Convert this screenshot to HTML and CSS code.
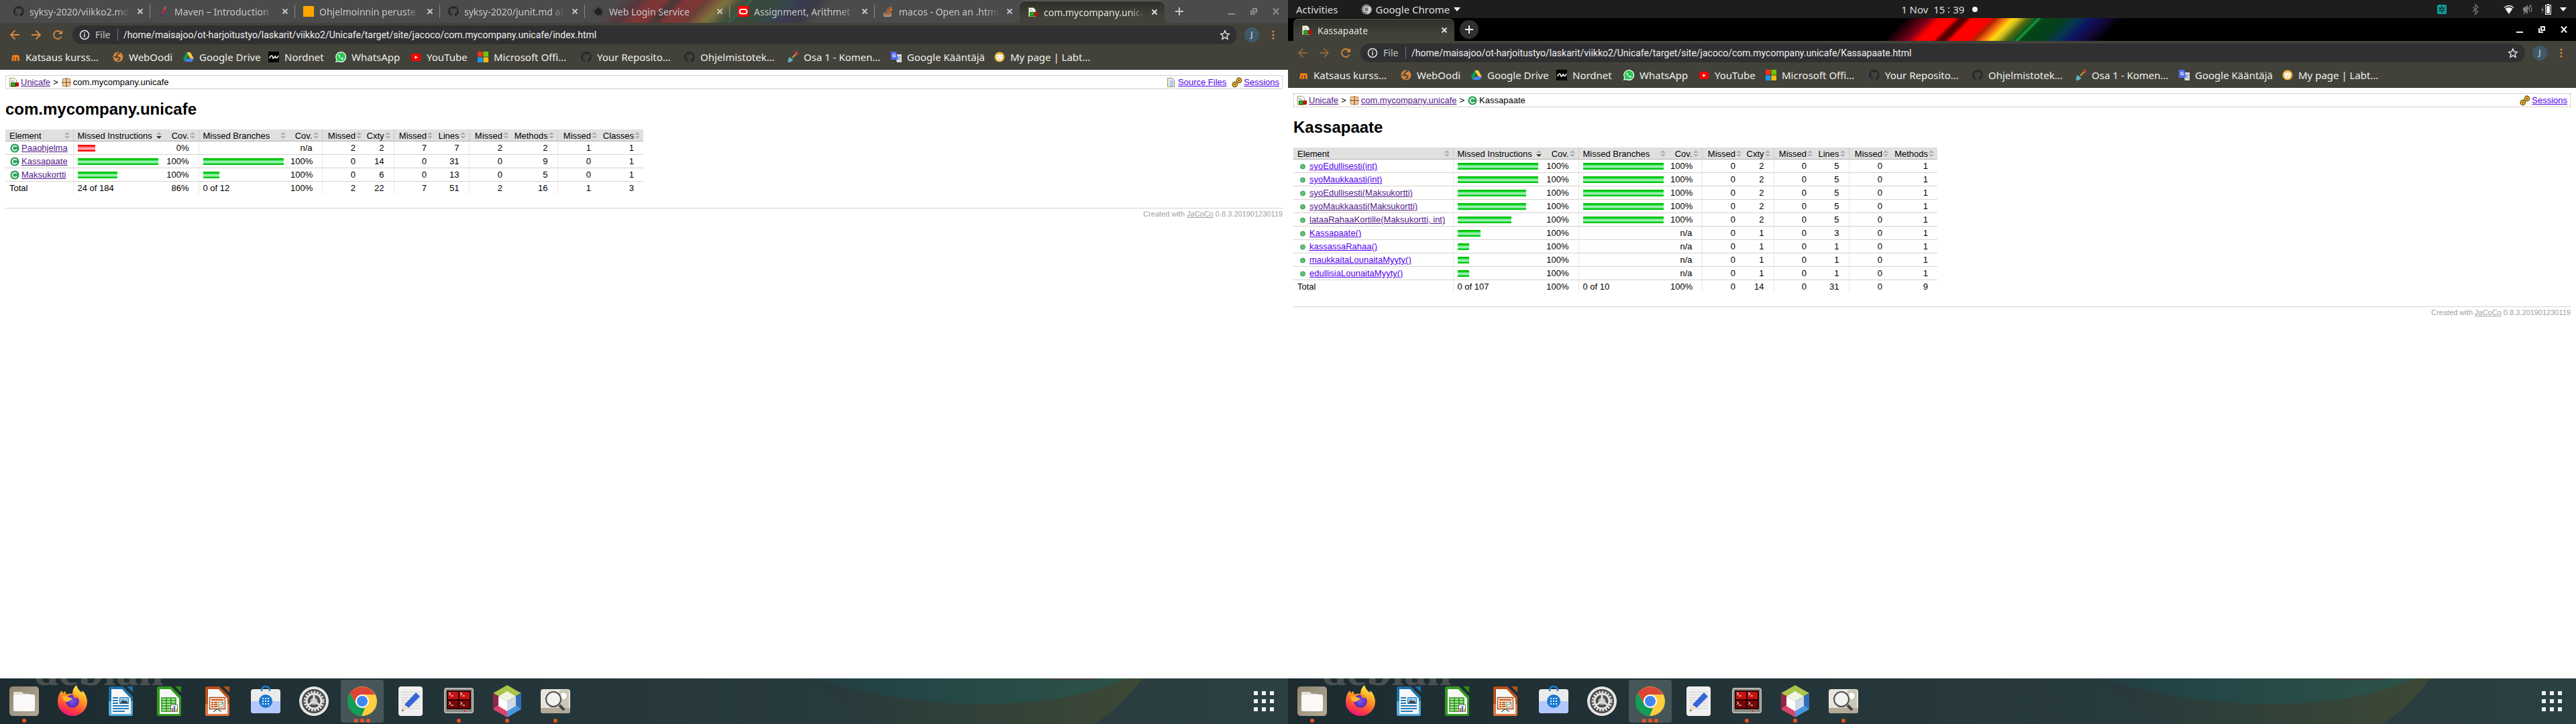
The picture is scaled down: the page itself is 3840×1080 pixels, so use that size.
FILE: index.html
```html
<!DOCTYPE html>
<html lang="en">
<head>
<meta charset="utf-8">
<title>com.mycompany.unicafe</title>
<link rel="stylesheet" href="styles.css">
</head>
<body>
<svg class="sprite" aria-hidden="true">
  <linearGradient id="g-fx" x1="0.7" y1="0" x2="0.3" y2="1"><stop offset="0" stop-color="#fff24a"/><stop offset=".4" stop-color="#ff9a1f"/><stop offset=".75" stop-color="#ff4040"/><stop offset="1" stop-color="#e3107f"/></linearGradient>
  <radialGradient id="g-fxc"><stop offset="0" stop-color="#7a52f0"/><stop offset="1" stop-color="#5b2bb0"/></radialGradient>
  <linearGradient id="g-tile" x1="0" y1="0" x2="1" y2="1"><stop offset="0" stop-color="#8f8672"/><stop offset="1" stop-color="#b3aa96"/></linearGradient>
  <linearGradient id="g-olive"><stop offset="0" stop-color="#26383c"/><stop offset=".35" stop-color="#2d3f3a"/><stop offset="1" stop-color="#3d4835"/></linearGradient>
  <linearGradient id="g-teal"><stop offset="0" stop-color="#223e42"/><stop offset=".3" stop-color="#234647"/><stop offset="1" stop-color="#2d5348"/></linearGradient>

  <symbol id="i-github" viewBox="0 0 16 16"><path fill="#24292e" d="M8 0a8 8 0 0 0-2.500 15.600c.4.100.500-.200.500-.400v-1.500c-2.200.500-2.700-1-2.700-1-.4-.9-.9-1.200-.9-1.200-.7-.5.1-.5.1-.5.8.1 1.200.8 1.200.8.7 1.300 1.900.9 2.300.7.1-.5.3-.9.5-1.100-1.800-.2-3.600-.9-3.600-4 0-.9.3-1.600.8-2.100 0-.2-.4-1 .1-2.100 0 0 .7-.2 2.200.8a7.600 7.600 0 0 1 4 0c1.500-1 2.200-.8 2.200-.8.4 1.100.2 1.900.1 2.100.5.6.8 1.300.8 2.100 0 3.100-1.900 3.700-3.700 3.900.3.300.6.800.6 1.500v2.200c0 .200.100.500.600.400A8 8 0 0 0 8 0z"/></symbol>
  <symbol id="i-feather" viewBox="0 0 16 16"><path fill="#c0245a" d="M4 15 6 8 8 4l3-3-1 6-3 5z"/><path fill="#f0762b" d="m8.500 4 2-4 .8 1-.8 4z"/><path stroke="#4b1f66" d="m3.500 16 2-5"/></symbol>
  <symbol id="i-square" viewBox="0 0 16 16"><path fill="#ffa500" d="M0 0h16v16H0z"/></symbol>
  <symbol id="i-login" viewBox="0 0 16 16"><path fill="#202124" d="m7 1 2 3 2-2v3l4-1-3 3 4 1-3 1 2 4-4-2 1 5-3-3-3 2V12l-4 1 2-3-4-1 3-1-3-4 4 2z"/></symbol>
  <symbol id="i-oracle" viewBox="0 0 16 16"><path fill="#f00" d="M0 0h16v16H0z"/><rect x="2.500" y="5" width="11" height="6.500" rx="3.200" fill="none" stroke="#fff" stroke-width="2"/></symbol>
  <symbol id="i-stack" viewBox="0 0 16 16"><path fill="none" stroke="#bcbbbb" stroke-width="1.300" d="M2 10v5h10v-5"/><path stroke="#e2762b" stroke-width="1.300" d="M3.500 13h7M3.700 10.500l6.900.9M4.500 7.500l6.500 2.300M6.300 4.500l5.500 4M9 2l4 5.500M12 .5l1.500 6"/></symbol>
  <symbol id="i-report" viewBox="0 0 16 16"><path fill="#fff" stroke="#a59a55" d="M1.500 1.500h7l3 3v10h-10z"/><path stroke="#9aa7c7" d="M3 4.500h4M3 6.500h6"/><path fill="#1cb81c" stroke="#1a5c1a" d="M3.500 8.500h6v5h-6z"/><path fill="#c00f0f" d="M10 8h5v6h-5z"/></symbol>
  <symbol id="i-package" viewBox="0 0 16 16"><path fill="#f0d3a8" stroke="#b57a45" d="M2.500 2.500h11v11h-11z"/><path fill="none" stroke="#a5673a" stroke-width="1.500" d="M8 1v14M1 8h14"/></symbol>
  <symbol id="i-class" viewBox="0 0 16 16"><circle cx="8" cy="8" r="6.600" fill="#2ba05f"/><path fill="none" stroke="#e6f6e6" stroke-width="1.800" d="M11 6.300a3.500 3.500 0 1 0 0 3.500"/></symbol>
  <symbol id="i-method" viewBox="0 0 16 16"><circle cx="8" cy="8.500" r="3.500" fill="#62c077" stroke="#2f9a58"/></symbol>
  <symbol id="i-source" viewBox="0 0 16 16"><path fill="#dfe6f5" stroke="#a59a55" d="M2.500 1.500h7l3 3v10h-10z"/><path fill="#b9c7e2" d="M6 5h5v9H6z"/></symbol>
  <symbol id="i-session" viewBox="0 0 16 16"><g fill="#e8b830" stroke="#7a5517" stroke-width="1.400"><circle cx="11" cy="5" r="3.700"/><circle cx="4.800" cy="11" r="3.700"/></g><g fill="#7a5517"><circle cx="11" cy="5" r="1.200"/><circle cx="4.800" cy="11" r="1.200"/></g></symbol>
  <symbol id="i-moodle" viewBox="0 0 16 16"><path fill="none" stroke="#f98012" stroke-width="2.800" d="M5 14V8.500q0-2 2-2t2 2V14m0-5.500q0-2 2.200-2t2.300 2V14"/><path fill="#4b4038" d="m0 5 5-3 3 2-4 2v3H1z"/></symbol>
  <symbol id="i-oodi" viewBox="0 0 16 16"><circle cx="8" cy="8" r="7.500" fill="#d9863b"/><path fill="none" stroke="#42423b" stroke-width="1.800" d="M11 2Q6 3 6 5.500T9.500 9 7 14M2 8q3-1 4 2"/></symbol>
  <symbol id="i-drive" viewBox="0 0 16 16"><path fill="#0f9d58" d="M5.300 1 0 10.500 2.700 15 8 5.600z"/><path fill="#ffcd40" d="M5.300 1h5.400L16 10.500h-5.300z"/><path fill="#4285f4" d="M5.300 10.500H16L13.300 15H2.700z"/></symbol>
  <symbol id="i-nordnet" viewBox="0 0 16 16"><path fill="#000" d="M0 0h16v16H0z"/><path fill="none" stroke="#fff" stroke-width="1.500" d="M1.500 10q2-4 3.500-4t2 4q2 0 3.500-4 .5 4 2 3.500T15 6"/></symbol>
  <symbol id="i-whatsapp" viewBox="0 0 16 16"><path fill="#fff" d="m0 16 1.200-4A8 8 0 1 1 4 14.900z"/><path fill="#25c850" d="m1.500 14.500.9-3A6.700 6.700 0 1 1 4.600 13.700z"/><path fill="#fff" d="M5.500 4q-2 1.500 0 4t4.500 3.700q1.800 0 2-1.900l-2-1-1 1.200Q7 9 6.300 7.300L7 6.300z"/></symbol>
  <symbol id="i-youtube" viewBox="0 0 16 16"><rect x="1" y="3" width="14" height="11" rx="2.500" fill="#f00"/><path fill="#fff" d="m6.500 6 4 2.500-4 2.500z"/></symbol>
  <symbol id="i-ms" viewBox="0 0 16 16"><path fill="#f22f1d" d="M0 0h7.500v7.500H0z"/><path fill="#6fc400" d="M8.500 0H16v7.500H8.500z"/><path fill="#129bf0" d="M0 8.500h7.500V16H0z"/><path fill="#fdbb10" d="M8.500 8.500H16V16H8.500z"/></symbol>
  <symbol id="i-shovel" viewBox="0 0 16 16"><path stroke="#d99a3b" stroke-width="1.800" d="m7 9 6-6"/><path fill="none" stroke="#c0392b" stroke-width="1.800" d="m12 1 3 3V1z"/><path fill="#5fb3bd" d="m3 8 5 4q-1 4-7 4-1-5 2-8z"/></symbol>
  <symbol id="i-translate" viewBox="0 0 16 16"><path fill="#dcdcdc" d="M6 4h10v12H9z"/><path fill="#4f6df5" d="M0 0h8l3 12H1q-1 0-1-1z"/><path fill="none" stroke="#fff" stroke-width="1.100" d="M6.500 4.500a2 2 0 1 0 0 2.500V6H5"/><path fill="none" stroke="#78909c" d="M10 8h5m-2.500-1v1q-.5 3-2 4m1-2 3 3"/></symbol>
  <symbol id="i-lab" viewBox="0 0 16 16"><circle cx="8" cy="8" r="7.500" fill="#efb43a"/><path fill="#fff" d="M3.500 4q2 1 4.500 0 2.500 1 4.500 0v4q0 5-4.500 5T3.500 8z"/><path stroke="#8a6a50" d="M6 7v1m4-1v1m-3 2.500h2"/></symbol>

  <symbol id="i-back" viewBox="0 0 16 16"><path fill="none" stroke="currentColor" stroke-width="1.800" d="M15 8H2m6.500-6.500L2 8l6.500 6.500"/></symbol>
  <symbol id="i-fwd" viewBox="0 0 16 16"><path fill="none" stroke="currentColor" stroke-width="1.800" d="M1 8h13M7.500 1.500 14 8l-6.500 6.500"/></symbol>
  <symbol id="i-reload" viewBox="0 0 16 16"><path fill="none" stroke="currentColor" stroke-width="1.800" d="M13.500 10.500A6 6 0 1 1 12.500 4"/><path fill="currentColor" d="M15 1v6H9z"/></symbol>
  <symbol id="i-info" viewBox="0 0 16 16"><circle cx="8" cy="8" r="6.500" fill="none" stroke="currentColor" stroke-width="1.500"/><path stroke="currentColor" stroke-width="1.600" d="M8 7v4.500M8 4.300v1.600"/></symbol>
  <symbol id="i-star" viewBox="0 0 16 16"><path fill="none" stroke="currentColor" stroke-width="1.400" d="m8 1.800 1.800 4.300 4.700.4-3.500 3.100 1 4.600L8 11.800l-4 2.400 1-4.600L1.500 6.500l4.700-.4z"/></symbol>
  <symbol id="i-dots" viewBox="0 0 16 16"><g fill="currentColor"><circle cx="8" cy="3" r="1.600"/><circle cx="8" cy="8" r="1.600"/><circle cx="8" cy="13" r="1.600"/></g></symbol>
  <symbol id="i-x" viewBox="0 0 16 16"><path stroke="currentColor" stroke-width="1.800" d="m4.500 4.500 7 7m0-7-7 7"/></symbol>
  <symbol id="i-plus" viewBox="0 0 16 16"><path stroke="currentColor" stroke-width="2" d="M8 2v12M2 8h12"/></symbol>
  <symbol id="i-min" viewBox="0 0 16 16"><path fill="currentColor" d="M3 11h10v2H3z"/></symbol>
  <symbol id="i-restore" viewBox="0 0 16 16"><path fill="none" stroke="currentColor" stroke-width="2" d="M7 4h5v5H7zM4 6v6h6"/></symbol>
  <symbol id="i-close" viewBox="0 0 16 16"><path stroke="currentColor" stroke-width="2" d="m4 3.500 8 9m0-9-8 9"/></symbol>

  <symbol id="d-files" viewBox="0 0 44 44"><rect width="44" height="44" rx="5" fill="url(#g-tile)"/><path fill="#e3dfd6" d="M6 10q0-2 2-2h10q2 0 3 3h10v6H6z"/><rect x="6" y="12" width="32" height="25" rx="2.500" fill="#faf9f7"/></symbol>
  <symbol id="d-firefox" viewBox="0 0 44 44"><path fill="url(#g-fx)" d="M0 23Q0 13 6 6l2 4 3-3 2 5q5-2 9-1Q22 3 28-2q2 7 8 11l1-3q7 8 7 17a22 21 0 0 1-44 0z"/><circle cx="22" cy="22" r="10" fill="url(#g-fxc)"/><path fill="#ffb52e" d="M7 15q6-1 12 2l3 1q-2 3-6 4-4 3-8-3z"/><path fill="#ff8d1f" d="M22 12q8 0 10 7-4-3-7-2z"/></symbol>
  <symbol id="d-writer" viewBox="0 0 44 44"><path fill="#1b6fa8" d="M4 3q0-3 3-3h18l15 15v26q0 3-3 3H7q-3 0-3-3z"/><path fill="#52aadc" d="M4 22h36v19q0 3-3 3H7q-3 0-3-3z"/><path fill="#f7f7f7" d="M8 4h16l13 14v22q0 1-1 1H8z"/><path fill="#1b6fa8" d="M31 0h9v9z"/><path stroke="#1f7bb8" stroke-width="2" d="M10 17h8m-8 4h8m-8 4h8m-8 4h24m-24 4h24m-24 4h18"/><path fill="#8fc6ea" stroke="#1f7bb8" d="M20.500 16.500h13v9h-13z"/><path fill="#444" d="m21 25 4-5 3 2 2-1 3 4z"/></symbol>
  <symbol id="d-calc" viewBox="0 0 44 44"><path fill="#329a1e" d="M4 3q0-3 3-3h18l15 15v26q0 3-3 3H7q-3 0-3-3z"/><path fill="#f7f7f7" d="M8 4h16l13 14v22q0 1-1 1H8z"/><path fill="#2f8a18" d="M31 0h9v9z"/><path fill="#a8ee9d" stroke="#2a8a1a" stroke-width="1.400" d="M11 17h21v20H11zm0 4h21m-21 4h21m-21 4h21m-21 4h21M18 17v20m7-20v20"/><path fill="#fff" stroke="#777" d="M24.500 27.500h10v10h-10z"/><path stroke="#e2632b" stroke-width="2.500" d="M27 37v-5"/><path stroke="#2f83d6" stroke-width="2.500" d="M30 37v-8"/><path stroke="#f0b030" stroke-width="2" d="M33 37v-4"/></symbol>
  <symbol id="d-impress" viewBox="0 0 44 44"><path fill="#b84e16" d="M4 3q0-3 3-3h18l15 15v26q0 3-3 3H7q-3 0-3-3z"/><path fill="#e07440" d="M4 26h36v15q0 3-3 3H7q-3 0-3-3z"/><path fill="#f7f7f7" d="M8 4h16l13 14v22q0 1-1 1H8z"/><path fill="#b84e16" d="M31 0h9v9z"/><path fill="#fbe0cf" stroke="#a84c18" stroke-width="1.300" d="M10.500 16.500h23v17h-23z"/><path stroke="#c8611f" stroke-width="2" d="M13 20h18M13 24h3m1 0h5m-9 3h3m1 0h5m-9 3h3m1 0h5"/><path fill="#fff" stroke="#888" d="M23.500 23.500h7v7h-7z"/><path fill="none" stroke="#2f9a3a" d="m24 29 3-3 1 1 2-3"/><path fill="none" stroke="#666" stroke-width="1.500" d="m16 38 5-4h2l5 4"/></symbol>
  <symbol id="d-software" viewBox="0 0 44 44"><rect y="4" width="44" height="36" rx="4" fill="#ebebeb"/><path fill="#b4c9fb" d="M0 22h44v14q0 4-4 4H4q-4 0-4-4z"/><path fill="none" stroke="#2080d0" stroke-width="2.500" d="M16 7q0-7 6-7t6 7"/><circle cx="22" cy="22" r="10" fill="#1878d2"/><path stroke="#fff" stroke-width="2" stroke-dasharray="2 2" d="M17 18h11m-11 4h11m-11 4h11"/></symbol>
  <symbol id="d-settings" viewBox="0 0 44 44"><circle cx="22" cy="22" r="22" fill="#e6e6e4"/><circle cx="22" cy="22" r="18" fill="#4a4a4a"/><circle cx="22" cy="22" r="13.500" fill="none" stroke="#dedede" stroke-width="4" stroke-dasharray="2.500 2"/><circle cx="22" cy="22" r="11" fill="none" stroke="#dedede" stroke-width="3"/><circle cx="22" cy="22" r="5.500" fill="#bbb"/><path stroke="#dedede" stroke-width="3" d="M22 22V11m0 11-9 6m9-6 9 6"/></symbol>
  <symbol id="d-chrome" viewBox="0 0 44 44"><circle cx="22" cy="22" r="22" fill="#ffcd40"/><path fill="#db4437" d="M3.500 10A22 22 0 0 1 41 12H22a10 10 0 0 0-9 15z"/><path fill="#0f9d58" d="M3.500 10 13 27q4 6 13 5l-5 12A22 22 0 0 1 3.500 10z"/><circle cx="22" cy="22" r="10" fill="#fff"/><circle cx="22" cy="22" r="8" fill="#4285f4"/></symbol>
  <symbol id="d-editor" viewBox="0 0 44 44"><rect x="4" width="36" height="44" rx="4" fill="#efefef"/><path stroke="#d0d0d0" d="M8 8.500h28M8 12.500h28M8 16.500h28M8 20.500h28M8 24.500h28M8 28.500h28M8 32.500h28"/><path fill="#3465d8" d="m30 9 6 6-17 17-6-5z"/><path fill="#f3dcc0" d="m13 27 6 5-9 5z"/><path fill="#333" d="m10 34 2 2-3 1z"/></symbol>
  <symbol id="d-term" viewBox="0 0 44 44"><rect y="2" width="44" height="38" rx="4" fill="#c6c6bf"/><rect x="1.500" y="3.500" width="41" height="35" rx="3" fill="#8a8a84"/><path fill="#2a0000" d="M4 6h36v28H4z"/><path fill="#c41212" d="M6 8h15v11H6zM23 8h15v11H23z"/><path fill="#770606" d="M6 21h15v11H6zM23 21h15v11H23z"/><path fill="none" stroke="#fff" d="m7 9 3 2-3 2m3 1h4m10-5 3 2-3 2m3 1h4"/><path fill="none" stroke="#fff" d="m7 23 3 2-3 2m3 1h4m10-5 3 2-3 2m3 1h4"/><circle cx="31" cy="37" r="1.200" fill="#f22"/></symbol>
  <symbol id="d-netbeans" viewBox="0 0 44 48"><path fill="#aac54b" d="M22 0 43 12 22 23 1 12z"/><path fill="#8f2746" d="M1 12 22 23 9 30 1 36z"/><path fill="#d9456a" d="m1 36 10-8 11 8v12z"/><path fill="#2f6cb8" d="M43 12v24l-9-8V17z"/><path fill="#4a94e0" d="M22 48V36l12-8 9 8z"/><path fill="#f1f5e0" d="m22 9 13 8-13 7-13-7z"/><path fill="#fff" d="m9 17 13 7v15L9 31z"/><path fill="#cfdae6" d="m35 17-13 7v15l13-8z"/></symbol>
  <symbol id="d-viewer" viewBox="0 0 44 44"><rect y="4" width="44" height="36" rx="4" fill="#e6e5da"/><path fill="#c9c8b8" d="M14 32 30 5h12v27z"/><path fill="#b3aa97" d="M0 32h44v4q0 4-4 4H4q-4 0-4-4z"/><circle cx="34" cy="14" r="4.500" fill="#fff"/><circle cx="19" cy="19" r="11" fill="#f2f2ef" stroke="#4d4d4d" stroke-width="2"/><path stroke="#444" stroke-width="4" d="m28 28 7 7"/></symbol>
  <symbol id="d-grid" viewBox="0 0 32 44"><path fill="#f0f0ee" d="M1 7h6v6H1zM13 7h6v6h-6zM25 7h6v6h-6zM1 19h6v6H1zM13 19h6v6h-6zM25 19h6v6h-6zM1 31h6v6H1zM13 31h6v6h-6zM25 31h6v6h-6z"/></symbol>
  <symbol id="d-waves" viewBox="0 0 500 68"><path fill="url(#g-olive)" d="M0 0h493q-30 40-71 68H80Z"/><path fill="url(#g-teal)" d="M4 0q127 38 254 38T470 0z"/><path fill="#453f3d" d="M347 0q44 6 88 0z"/></symbol>
</svg>

<section class="monitor">
  <div class="strip strip-dim">
    <div class="tab"><svg class="ico"><use href="#i-github"/></svg><span class="tab-title">syksy-2020/viikko2.md</span><button class="tab-x" aria-label="Close tab"><svg class="ico"><use href="#i-x"/></svg></button></div>
    <div class="tab"><svg class="ico"><use href="#i-feather"/></svg><span class="tab-title">Maven – Introduction</span><button class="tab-x" aria-label="Close tab"><svg class="ico"><use href="#i-x"/></svg></button></div>
    <div class="tab"><svg class="ico"><use href="#i-square"/></svg><span class="tab-title">Ohjelmoinnin peruste</span><button class="tab-x" aria-label="Close tab"><svg class="ico"><use href="#i-x"/></svg></button></div>
    <div class="tab"><svg class="ico"><use href="#i-github"/></svg><span class="tab-title">syksy-2020/junit.md at</span><button class="tab-x" aria-label="Close tab"><svg class="ico"><use href="#i-x"/></svg></button></div>
    <div class="tab"><svg class="ico"><use href="#i-login"/></svg><span class="tab-title">Web Login Service</span><button class="tab-x" aria-label="Close tab"><svg class="ico"><use href="#i-x"/></svg></button></div>
    <div class="tab"><svg class="ico"><use href="#i-oracle"/></svg><span class="tab-title">Assignment, Arithmet</span><button class="tab-x" aria-label="Close tab"><svg class="ico"><use href="#i-x"/></svg></button></div>
    <div class="tab tab-last"><svg class="ico"><use href="#i-stack"/></svg><span class="tab-title">macos - Open an .html</span><button class="tab-x" aria-label="Close tab"><svg class="ico"><use href="#i-x"/></svg></button></div>
    <div class="tab tab-active"><svg class="ico"><use href="#i-report"/></svg><span class="tab-title">com.mycompany.unica</span><button class="tab-x" aria-label="Close tab"><svg class="ico"><use href="#i-x"/></svg></button></div>
    <button class="new-tab" aria-label="New tab"><svg class="ico"><use href="#i-plus"/></svg></button>
    <div class="win-buttons"><button aria-label="Minimize"><svg class="ico"><use href="#i-min"/></svg></button><button aria-label="Restore"><svg class="ico"><use href="#i-restore"/></svg></button><button aria-label="Close"><svg class="ico"><use href="#i-close"/></svg></button></div>
  </div>
  <div class="toolbar">
    <button class="nav" aria-label="Back"><svg class="ico"><use href="#i-back"/></svg></button>
    <button class="nav" aria-label="Forward"><svg class="ico"><use href="#i-fwd"/></svg></button>
    <button class="nav" aria-label="Reload"><svg class="ico"><use href="#i-reload"/></svg></button>
    <div class="omnibox"><svg class="ico"><use href="#i-info"/></svg><label class="scheme" for="url-a">File</label><input id="url-a" class="url" value="/home/maisajoo/ot-harjoitustyo/laskarit/viikko2/Unicafe/target/site/jacoco/com.mycompany.unicafe/index.html"><button class="star" aria-label="Bookmark"><svg class="ico"><use href="#i-star"/></svg></button></div>
    <button class="avatar">J</button>
    <button class="nav" aria-label="Menu"><svg class="ico"><use href="#i-dots"/></svg></button>
  </div>
  <nav class="bookmarks">
    <a class="bm wide" href="#"><svg class="ico"><use href="#i-moodle"/></svg>Katsaus kurss…</a>
    <a class="bm short" href="#"><svg class="ico"><use href="#i-oodi"/></svg>WebOodi</a>
    <a class="bm mid" href="#"><svg class="ico"><use href="#i-drive"/></svg>Google Drive</a>
    <a class="bm" href="#"><svg class="ico"><use href="#i-nordnet"/></svg>Nordnet</a>
    <a class="bm medium" href="#"><svg class="ico"><use href="#i-whatsapp"/></svg>WhatsApp</a>
    <a class="bm" href="#"><svg class="ico"><use href="#i-youtube"/></svg>YouTube</a>
    <a class="bm wide" href="#"><svg class="ico"><use href="#i-ms"/></svg>Microsoft Offi…</a>
    <a class="bm wide" href="#"><svg class="ico"><use href="#i-github"/></svg>Your Reposito…</a>
    <a class="bm wide" href="#"><svg class="ico"><use href="#i-github"/></svg>Ohjelmistotek…</a>
    <a class="bm wide" href="#"><svg class="ico"><use href="#i-shovel"/></svg>Osa 1 - Komen…</a>
    <a class="bm wide" href="#"><svg class="ico"><use href="#i-translate"/></svg>Google Kääntäjä</a>
    <a class="bm wide" href="#"><svg class="ico"><use href="#i-lab"/></svg>My page | Labt…</a>
  </nav>
  <main class="page">
    <div class="breadcrumb">
      <a class="el" href="#"><svg class="ico"><use href="#i-report"/></svg><span>Unicafe</span></a><span>&gt;</span><span class="el"><svg class="ico"><use href="#i-package"/></svg><span>com.mycompany.unicafe</span></span>
      <span class="info"><a class="el fresh" href="#"><svg class="ico"><use href="#i-source"/></svg><span>Source Files</span></a><a class="el fresh" href="#"><svg class="ico"><use href="#i-session"/></svg><span>Sessions</span></a></span>
    </div>
    <h1>com.mycompany.unicafe</h1>
    <table class="coverage">
      <colgroup><col class="c-package"><col class="c-instr"><col class="c-cov"><col class="c-branch"><col class="c-cov2"><col class="c-missed"><col class="c-cxty"><col class="c-missed2"><col class="c-lines"><col class="c-missed"><col class="c-methods"><col class="c-missed"><col class="c-missed"></colgroup>
      <thead><tr><th>Element</th><th class="bar down">Missed Instructions</th><th class="n">Cov.</th><th class="bar">Missed Branches</th><th class="n">Cov.</th><th class="n sep">Missed</th><th class="n">Cxty</th><th class="n sep">Missed</th><th class="n">Lines</th><th class="n sep">Missed</th><th class="n">Methods</th><th class="n sep">Missed</th><th class="n">Classes</th></tr></thead>
      <tbody>
        <tr><td><a class="el" href="#"><svg class="ico"><use href="#i-class"/></svg><span>Paaohjelma</span></a></td><td class="bar"><i class="meter red" style="width:26px"></i></td><td class="n">0%</td><td class="bar"></td><td class="n">n/a</td><td class="n sep">2</td><td class="n">2</td><td class="n sep">7</td><td class="n">7</td><td class="n sep">2</td><td class="n">2</td><td class="n sep">1</td><td class="n">1</td></tr>
        <tr><td><a class="el" href="#"><svg class="ico"><use href="#i-class"/></svg><span>Kassapaate</span></a></td><td class="bar"><i class="meter" style="width:120px"></i></td><td class="n">100%</td><td class="bar"><i class="meter" style="width:120px"></i></td><td class="n">100%</td><td class="n sep">0</td><td class="n">14</td><td class="n sep">0</td><td class="n">31</td><td class="n sep">0</td><td class="n">9</td><td class="n sep">0</td><td class="n">1</td></tr>
        <tr><td><a class="el" href="#"><svg class="ico"><use href="#i-class"/></svg><span>Maksukortti</span></a></td><td class="bar"><i class="meter" style="width:59px"></i></td><td class="n">100%</td><td class="bar"><i class="meter" style="width:24px"></i></td><td class="n">100%</td><td class="n sep">0</td><td class="n">6</td><td class="n sep">0</td><td class="n">13</td><td class="n sep">0</td><td class="n">5</td><td class="n sep">0</td><td class="n">1</td></tr>
      </tbody>
      <tfoot><tr><td>Total</td><td class="bar">24 of 184</td><td class="n">86%</td><td class="bar">0 of 12</td><td class="n">100%</td><td class="n sep">2</td><td class="n">22</td><td class="n sep">7</td><td class="n">51</td><td class="n sep">2</td><td class="n">16</td><td class="n sep">1</td><td class="n">3</td></tr></tfoot>
    </table>
    <footer class="footer">Created with <a href="#">JaCoCo</a> 0.8.3.201901230119</footer>
  </main>
  <div class="dock">
    <svg class="waves" aria-hidden="true"><use href="#d-waves"/></svg>
    <span class="watermark" aria-hidden="true">debian</span>
    <button class="app" aria-label="Files"><svg><use href="#d-files"/></svg><i class="run"></i></button>
    <button class="app" aria-label="Firefox"><svg><use href="#d-firefox"/></svg></button>
    <button class="app" aria-label="Writer"><svg><use href="#d-writer"/></svg></button>
    <button class="app" aria-label="Calc"><svg><use href="#d-calc"/></svg></button>
    <button class="app" aria-label="Impress"><svg><use href="#d-impress"/></svg></button>
    <button class="app" aria-label="Software"><svg><use href="#d-software"/></svg></button>
    <button class="app" aria-label="Settings"><svg><use href="#d-settings"/></svg></button>
    <button class="app current" aria-label="Chrome"><svg><use href="#d-chrome"/></svg><i class="run three"></i></button>
    <button class="app" aria-label="Text Editor"><svg><use href="#d-editor"/></svg></button>
    <button class="app" aria-label="Terminal"><svg><use href="#d-term"/></svg><i class="run"></i></button>
    <button class="app" aria-label="NetBeans"><svg><use href="#d-netbeans"/></svg><i class="run"></i></button>
    <button class="app" aria-label="Image Viewer"><svg><use href="#d-viewer"/></svg><i class="run"></i></button>
    <button class="app last" aria-label="Show Applications"><svg><use href="#d-grid"/></svg></button>
  </div>
</section>

<section class="monitor">
  <header class="topbar">
    <button>Activities</button>
    <button class="app-menu"><svg class="ico" viewBox="0 0 16 16"><circle cx="8" cy="8" r="7.500" fill="#8a8a8a"/><path fill="#c9c9c9" d="M8 4.500h6.700A7.500 7.500 0 0 1 8 15.500l3-6z"/><circle cx="8" cy="8" r="3.500" fill="#777" stroke="#e6e6e6" stroke-width="1.200"/></svg>Google Chrome<svg class="caret" viewBox="0 0 10 6"><path fill="#fff" d="M0 0h10L5 6z"/></svg></button>
    <button class="clock">1 Nov&nbsp; 15 ∶ 39<i class="dot"></i></button>
    <div class="tray">
      <svg class="ico" viewBox="0 0 16 16"><rect x="1" y="1" width="14" height="14" rx="2.500" fill="#0f9d9a"/><path stroke="#0c2f33" stroke-width="2" d="M8 3v10M3.700 5.500l8.600 5m0-5-8.600 5"/><circle cx="8" cy="8" r="1.500" fill="#0f9d9a"/></svg>
      <svg class="ico gap-l" viewBox="0 0 16 16"><path fill="none" stroke="#6a6a6a" stroke-width="1.500" d="m4 4.500 8 7L8 15V1l4 3.500-8 7"/></svg>
      <svg class="ico gap-l" viewBox="0 0 16 16"><path fill="#f2f2f2" d="M2.500 7Q8 3 13.500 7L8 15z"/><path fill="none" stroke="#f2f2f2" stroke-width="1.400" d="M1 5.500q7-6 14 0"/></svg>
      <svg class="ico" viewBox="0 0 16 16"><path fill="#7d7d7d" d="M1 5h3l4-4v14l-4-4H1z"/><path fill="none" stroke="#7d7d7d" stroke-width="1.300" d="M2 15 13 1m-3 5q1.500 3 0 5m2.500-8q3 5 0 9"/></svg>
      <svg class="ico" viewBox="0 0 16 16"><path fill="#8a8a8a" d="M3 3 0 9h2l-1 5 3-6H2z"/><path fill="#f2f2f2" d="M9 0h3v1h3v15H6V1h3z"/><path fill="none" stroke="#1d1d1d" d="M7.500 2.500h6v12h-6z"/></svg>
      <svg class="caret" viewBox="0 0 10 6"><path fill="#fff" d="M0 0h10L5 6z"/></svg>
    </div>
  </header>
  <div class="strip strip-dark">
    <div class="tab tab-active tab-wide"><svg class="ico"><use href="#i-report"/></svg><span class="tab-title">Kassapaate</span><button class="tab-x" aria-label="Close tab"><svg class="ico"><use href="#i-x"/></svg></button></div>
    <button class="new-tab" aria-label="New tab"><svg class="ico"><use href="#i-plus"/></svg></button>
    <div class="win-buttons"><button aria-label="Minimize"><svg class="ico"><use href="#i-min"/></svg></button><button aria-label="Restore"><svg class="ico"><use href="#i-restore"/></svg></button><button aria-label="Close"><svg class="ico"><use href="#i-close"/></svg></button></div>
  </div>
  <div class="toolbar">
    <button class="nav off" aria-label="Back"><svg class="ico"><use href="#i-back"/></svg></button>
    <button class="nav off" aria-label="Forward"><svg class="ico"><use href="#i-fwd"/></svg></button>
    <button class="nav" aria-label="Reload"><svg class="ico"><use href="#i-reload"/></svg></button>
    <div class="omnibox"><svg class="ico"><use href="#i-info"/></svg><label class="scheme" for="url-b">File</label><input id="url-b" class="url" value="/home/maisajoo/ot-harjoitustyo/laskarit/viikko2/Unicafe/target/site/jacoco/com.mycompany.unicafe/Kassapaate.html"><button class="star" aria-label="Bookmark"><svg class="ico"><use href="#i-star"/></svg></button></div>
    <button class="avatar">J</button>
    <button class="nav" aria-label="Menu"><svg class="ico"><use href="#i-dots"/></svg></button>
  </div>
  <nav class="bookmarks">
    <a class="bm wide" href="#"><svg class="ico"><use href="#i-moodle"/></svg>Katsaus kurss…</a>
    <a class="bm short" href="#"><svg class="ico"><use href="#i-oodi"/></svg>WebOodi</a>
    <a class="bm mid" href="#"><svg class="ico"><use href="#i-drive"/></svg>Google Drive</a>
    <a class="bm" href="#"><svg class="ico"><use href="#i-nordnet"/></svg>Nordnet</a>
    <a class="bm medium" href="#"><svg class="ico"><use href="#i-whatsapp"/></svg>WhatsApp</a>
    <a class="bm" href="#"><svg class="ico"><use href="#i-youtube"/></svg>YouTube</a>
    <a class="bm wide" href="#"><svg class="ico"><use href="#i-ms"/></svg>Microsoft Offi…</a>
    <a class="bm wide" href="#"><svg class="ico"><use href="#i-github"/></svg>Your Reposito…</a>
    <a class="bm wide" href="#"><svg class="ico"><use href="#i-github"/></svg>Ohjelmistotek…</a>
    <a class="bm wide" href="#"><svg class="ico"><use href="#i-shovel"/></svg>Osa 1 - Komen…</a>
    <a class="bm wide" href="#"><svg class="ico"><use href="#i-translate"/></svg>Google Kääntäjä</a>
    <a class="bm wide" href="#"><svg class="ico"><use href="#i-lab"/></svg>My page | Labt…</a>
  </nav>
  <main class="page">
    <div class="breadcrumb">
      <a class="el" href="#"><svg class="ico"><use href="#i-report"/></svg><span>Unicafe</span></a><span>&gt;</span><a class="el" href="#"><svg class="ico"><use href="#i-package"/></svg><span>com.mycompany.unicafe</span></a><span>&gt;</span><span class="el"><svg class="ico"><use href="#i-class"/></svg><span>Kassapaate</span></span>
      <span class="info"><a class="el fresh" href="#"><svg class="ico"><use href="#i-session"/></svg><span>Sessions</span></a></span>
    </div>
    <h1>Kassapaate</h1>
    <table class="coverage">
      <colgroup><col class="c-class"><col class="c-instr"><col class="c-cov"><col class="c-branch"><col class="c-cov2"><col class="c-missed"><col class="c-cxty"><col class="c-missed2"><col class="c-lines"><col class="c-missed"><col class="c-methods"></colgroup>
      <thead><tr><th>Element</th><th class="bar down">Missed Instructions</th><th class="n">Cov.</th><th class="bar">Missed Branches</th><th class="n">Cov.</th><th class="n sep">Missed</th><th class="n">Cxty</th><th class="n sep">Missed</th><th class="n">Lines</th><th class="n sep">Missed</th><th class="n">Methods</th></tr></thead>
      <tbody>
        <tr><td><a class="el fresh" href="#"><svg class="ico"><use href="#i-method"/></svg><span>syoEdullisesti(int)</span></a></td><td class="bar"><i class="meter" style="width:120px"></i></td><td class="n">100%</td><td class="bar"><i class="meter" style="width:120px"></i></td><td class="n">100%</td><td class="n sep">0</td><td class="n">2</td><td class="n sep">0</td><td class="n">5</td><td class="n sep">0</td><td class="n">1</td></tr>
        <tr><td><a class="el fresh" href="#"><svg class="ico"><use href="#i-method"/></svg><span>syoMaukkaasti(int)</span></a></td><td class="bar"><i class="meter" style="width:120px"></i></td><td class="n">100%</td><td class="bar"><i class="meter" style="width:120px"></i></td><td class="n">100%</td><td class="n sep">0</td><td class="n">2</td><td class="n sep">0</td><td class="n">5</td><td class="n sep">0</td><td class="n">1</td></tr>
        <tr><td><a class="el" href="#"><svg class="ico"><use href="#i-method"/></svg><span>syoEdullisesti(Maksukortti)</span></a></td><td class="bar"><i class="meter" style="width:102px"></i></td><td class="n">100%</td><td class="bar"><i class="meter" style="width:120px"></i></td><td class="n">100%</td><td class="n sep">0</td><td class="n">2</td><td class="n sep">0</td><td class="n">5</td><td class="n sep">0</td><td class="n">1</td></tr>
        <tr><td><a class="el" href="#"><svg class="ico"><use href="#i-method"/></svg><span>syoMaukkaasti(Maksukortti)</span></a></td><td class="bar"><i class="meter" style="width:102px"></i></td><td class="n">100%</td><td class="bar"><i class="meter" style="width:120px"></i></td><td class="n">100%</td><td class="n sep">0</td><td class="n">2</td><td class="n sep">0</td><td class="n">5</td><td class="n sep">0</td><td class="n">1</td></tr>
        <tr><td><a class="el" href="#"><svg class="ico"><use href="#i-method"/></svg><span>lataaRahaaKortille(Maksukortti, int)</span></a></td><td class="bar"><i class="meter" style="width:80px"></i></td><td class="n">100%</td><td class="bar"><i class="meter" style="width:120px"></i></td><td class="n">100%</td><td class="n sep">0</td><td class="n">2</td><td class="n sep">0</td><td class="n">5</td><td class="n sep">0</td><td class="n">1</td></tr>
        <tr><td><a class="el fresh" href="#"><svg class="ico"><use href="#i-method"/></svg><span>Kassapaate()</span></a></td><td class="bar"><i class="meter" style="width:34px"></i></td><td class="n">100%</td><td class="bar"></td><td class="n">n/a</td><td class="n sep">0</td><td class="n">1</td><td class="n sep">0</td><td class="n">3</td><td class="n sep">0</td><td class="n">1</td></tr>
        <tr><td><a class="el fresh" href="#"><svg class="ico"><use href="#i-method"/></svg><span>kassassaRahaa()</span></a></td><td class="bar"><i class="meter" style="width:17px"></i></td><td class="n">100%</td><td class="bar"></td><td class="n">n/a</td><td class="n sep">0</td><td class="n">1</td><td class="n sep">0</td><td class="n">1</td><td class="n sep">0</td><td class="n">1</td></tr>
        <tr><td><a class="el fresh" href="#"><svg class="ico"><use href="#i-method"/></svg><span>maukkaitaLounaitaMyyty()</span></a></td><td class="bar"><i class="meter" style="width:17px"></i></td><td class="n">100%</td><td class="bar"></td><td class="n">n/a</td><td class="n sep">0</td><td class="n">1</td><td class="n sep">0</td><td class="n">1</td><td class="n sep">0</td><td class="n">1</td></tr>
        <tr><td><a class="el fresh" href="#"><svg class="ico"><use href="#i-method"/></svg><span>edullisiaLounaitaMyyty()</span></a></td><td class="bar"><i class="meter" style="width:17px"></i></td><td class="n">100%</td><td class="bar"></td><td class="n">n/a</td><td class="n sep">0</td><td class="n">1</td><td class="n sep">0</td><td class="n">1</td><td class="n sep">0</td><td class="n">1</td></tr>
      </tbody>
      <tfoot><tr><td>Total</td><td class="bar">0 of 107</td><td class="n">100%</td><td class="bar">0 of 10</td><td class="n">100%</td><td class="n sep">0</td><td class="n">14</td><td class="n sep">0</td><td class="n">31</td><td class="n sep">0</td><td class="n">9</td></tr></tfoot>
    </table>
    <footer class="footer">Created with <a href="#">JaCoCo</a> 0.8.3.201901230119</footer>
  </main>
  <div class="dock">
    <svg class="waves" aria-hidden="true"><use href="#d-waves"/></svg>
    <span class="watermark" aria-hidden="true">debian</span>
    <button class="app" aria-label="Files"><svg><use href="#d-files"/></svg><i class="run"></i></button>
    <button class="app" aria-label="Firefox"><svg><use href="#d-firefox"/></svg></button>
    <button class="app" aria-label="Writer"><svg><use href="#d-writer"/></svg></button>
    <button class="app" aria-label="Calc"><svg><use href="#d-calc"/></svg></button>
    <button class="app" aria-label="Impress"><svg><use href="#d-impress"/></svg></button>
    <button class="app" aria-label="Software"><svg><use href="#d-software"/></svg></button>
    <button class="app" aria-label="Settings"><svg><use href="#d-settings"/></svg></button>
    <button class="app current" aria-label="Chrome"><svg><use href="#d-chrome"/></svg><i class="run three"></i></button>
    <button class="app" aria-label="Text Editor"><svg><use href="#d-editor"/></svg></button>
    <button class="app" aria-label="Terminal"><svg><use href="#d-term"/></svg><i class="run"></i></button>
    <button class="app" aria-label="NetBeans"><svg><use href="#d-netbeans"/></svg><i class="run"></i></button>
    <button class="app" aria-label="Image Viewer"><svg><use href="#d-viewer"/></svg><i class="run"></i></button>
    <button class="app last" aria-label="Show Applications"><svg><use href="#d-grid"/></svg></button>
  </div>
</section>
</body>
</html>
```
FILE: styles.css
```css
* { box-sizing: border-box; }

body {
  margin: 0;
  min-height: 100vh;
  display: grid;
  grid-template-columns: 1fr 1fr;
  background: #fff;
  font-family: "Noto Sans", "Open Sans", sans-serif;
  font-size: 14px;
}

button {
  border: 0;
  padding: 0;
  background: none;
  color: inherit;
  font: inherit;
}

.sprite { position: absolute; width: 0; height: 0; }
.ico { width: 16px; height: 16px; flex: none; display: block; overflow: visible; }
.caret { width: 10px; height: 6px; }

.monitor { display: flex; flex-direction: column; min-width: 0; }

/* Desktop top bar */
.topbar {
  height: 27px;
  display: grid;
  grid-template-columns: auto 1fr auto 1fr;
  align-items: center;
  padding: 0 14px 0 12px;
  background: #1d1d1d;
  color: #dedede;
  font-size: 15px;
}
.app-menu { display: flex; align-items: center; gap: 6px; margin-left: 34px; }
.clock { display: flex; align-items: center; gap: 12px; margin-right: 38px; }
.dot { width: 8px; height: 8px; border-radius: 50%; background: #f2f2f2; }
.tray { display: flex; align-items: center; justify-content: flex-end; gap: 12px; }
.gap-l { margin-left: 22px; }

/* Tab strip */
.strip {
  --rainbow: linear-gradient(135deg, transparent 14%, #7a0018 22%, #f00 26%, #f00 31%, #500 33%, #500 35%, #f00 37%, #f00 43%, #b02000 45%, #f07010 48%, #ffd80c 51%, #d0c020 53%, #5a6a10 56%, #0c5a20 59%, #18a040 60%, #06461a 61%, #033f18 68%, #063a50 73%, #0c1464 78%, #14083c 83%, transparent 89%);
  height: 34px;
  display: flex;
  align-items: stretch;
  padding: 0 10px 0 8px;
}
.strip-dim {
  background: linear-gradient(#4b4b4bb8, #4b4b4bb8), var(--rainbow) 860px 0 / 400px 34px no-repeat, #4b4b4b;
  color: #c9c9c9;
}
.strip-dark {
  background: var(--rainbow) 860px 0 / 400px 34px no-repeat, #000;
  color: #f0f0f0;
}
.tab {
  width: 216px;
  display: flex;
  align-items: center;
  gap: 8px;
  padding: 0 7px 0 12px;
  background: linear-gradient(#8a8a8a, #8a8a8a) right center / 1px 20px no-repeat;
}
.tab-last { background: none; }
.tab-title {
  flex: 1;
  overflow: hidden;
  white-space: nowrap;
  -webkit-mask-image: linear-gradient(90deg, #000 calc(100% - 20px), transparent);
  mask-image: linear-gradient(90deg, #000 calc(100% - 20px), transparent);
}
.tab-active {
  margin-top: 1px;
  border-radius: 8px 8px 0 0;
  background: linear-gradient(#2f2f2a, #42423b 70%);
  border-top: 1px solid #66665c;
  color: #e6e6e0;
}
.tab-wide { width: 240px; }
.new-tab {
  width: 28px;
  height: 28px;
  margin: 3px 0 0 8px;
  border-radius: 50%;
  display: grid;
  place-items: center;
}
.strip-dark .new-tab { background: #303032; }
.win-buttons { margin-left: auto; display: flex; align-items: center; gap: 17px; }
.strip-dim .win-buttons { color: #8f8f8f; }

/* Toolbar */
.toolbar {
  height: 36px;
  display: flex;
  align-items: center;
  gap: 16px;
  padding: 0 14px;
  background: #42423b;
  color: #d9863b;
}
.off { opacity: .5; }
.omnibox {
  flex: 1;
  height: 28px;
  margin: 0 -5px 0 -2px;
  display: flex;
  align-items: center;
  gap: 8px;
  padding: 0 10px;
  border-radius: 14px;
  background: #303032;
  color: #e6e6e6;
}
.scheme { color: #c4c4c4; width: 34px; border-right: 1px solid #77777a; line-height: 18px; }
.url {
  flex: 1;
  min-width: 0;
  border: 0;
  padding: 0;
  background: none;
  color: #f0f0f0;
  font: 14px Roboto, sans-serif;
}
.avatar {
  width: 22px;
  height: 22px;
  margin-right: -3px;
  border-radius: 50%;
  background: #40596a;
  color: #e6e6e6;
  font-size: 12px;
  line-height: 22px;
}

/* Bookmarks bar */
.bookmarks {
  height: 34px;
  display: flex;
  align-items: center;
  padding: 0 14px 4px;
  background: #42423b;
  border-bottom: 1px solid #2c2c29;
  font-size: 15px;
}
.bm {
  width: 100px;
  display: flex;
  align-items: center;
  gap: 8px;
  color: #f0f0ec;
  text-decoration: none;
  white-space: nowrap;
}
.short { width: 105px; }
.medium { width: 112px; }
.mid { width: 127px; }
.wide { width: 154px; }

/* Coverage report */
.page {
  flex: 1;
  padding: 8px;
  background: #fff;
  color: #000;
  font: 13px/15px "Liberation Sans", Arial, sans-serif;
}
.breadcrumb {
  height: 21px;
  display: flex;
  align-items: center;
  gap: 4px;
  padding: 0 4px;
  border: 1px solid #d6d3ce;
}
.el { display: inline-flex; align-items: center; gap: 2px; text-decoration: none; height: 15px; vertical-align: top; }
a.el { color: #551a8b; }
a.fresh { color: #5500ee; }
a.el span { text-decoration: underline; }
.info { margin-left: auto; display: flex; gap: 8px; }
h1 { margin: 16px 0; font-size: 24px; line-height: 28px; }

.coverage { border-collapse: collapse; table-layout: fixed; width: 0; }
.c-package { width: 101px; }
.c-class { width: 238px; }
.c-instr { width: 137px; }
.c-cov { width: 50px; }
.c-branch { width: 135px; }
.c-cov2, .c-lines { width: 49px; }
.c-missed { width: 64px; }
.c-missed2 { width: 63px; }
.c-cxty { width: 43px; }
.c-methods { width: 68px; }
th {
  padding: 2px 14px 0 6px;
  border-bottom: 1px solid #b0b0b0;
  background: url("data:image/svg+xml,%3Csvg xmlns='http://www.w3.org/2000/svg' width='8' height='10'%3E%3Cpath fill='%23b0b0b0' d='M0 4h8L4 0zM0 6h8l-4 4z'/%3E%3C/svg%3E") right 5px center no-repeat #e0e0e0;
  font-weight: normal;
  text-align: left;
  white-space: nowrap;
}
th.down { background-image: url("data:image/svg+xml,%3Csvg xmlns='http://www.w3.org/2000/svg' width='8' height='10'%3E%3Cpath fill='%23b0b0b0' d='M0 4h8L4 0z'/%3E%3Cpath fill='%23403020' d='M0 6h8l-4 4z'/%3E%3C/svg%3E"); }
th.bar, th.sep { border-left: 1px solid #ccc; }
td { padding: 2px 6px; white-space: nowrap; height: 20px; }
tbody td { border-bottom: 1px solid #d6d3ce; }
tfoot td { height: 19px; }
td.bar, td.sep { border-left: 1px solid #e8e8e8; }
.n { text-align: right; padding-left: 2px; }
td.n { padding-right: 14px; }
.meter {
  display: block;
  height: 10px;
  background: linear-gradient(#00c000 0 2px, #00d828 2px 3px, #4ee070 3px 4px, #98f0a8 4px 7px, #4ee070 7px 8px, #00c810 8px);
}
.red { background: linear-gradient(#f00 0 2px, #ff2838 2px 3px, #ff6a74 3px 4px, #ffa0a6 4px 7px, #ff6a74 7px 8px, #f00 8px); }
.footer {
  margin-top: 20px;
  padding-top: 1px;
  border-top: 1px solid #d6d3ce;
  color: #a0a0a0;
  font-size: 11px;
  text-align: right;
}
.footer a { color: #a0a0a0; }

/* Dock */
.dock {
  position: relative;
  height: 68px;
  display: flex;
  gap: 8px;
  padding: 2px 4px;
  overflow: hidden;
  background: linear-gradient(90deg, #1c2b30, #26383c 50%, #2b4042);
}
.waves { position: absolute; left: 1210px; top: 0; width: 500px; height: 68px; }
.watermark {
  position: absolute;
  left: 50px;
  bottom: 58px;
  color: #4a5052;
  font: bold 67px/46px "Liberation Serif", serif;
}
.app {
  position: relative;
  width: 64px;
  height: 64px;
  border-radius: 4px;
  display: grid;
  place-items: center;
}
.app svg { width: 44px; height: 48px; overflow: visible; }
.current { background: #465557; }
.last { margin-left: auto; }
.last svg { width: 32px; height: 44px; }
.run {
  position: absolute;
  left: 29px;
  bottom: 0;
  width: 6px;
  height: 6px;
  border-radius: 50%;
  background: #e95420;
}
.three { box-shadow: -9px 0 #e95420, 9px 0 #e95420; }
```
